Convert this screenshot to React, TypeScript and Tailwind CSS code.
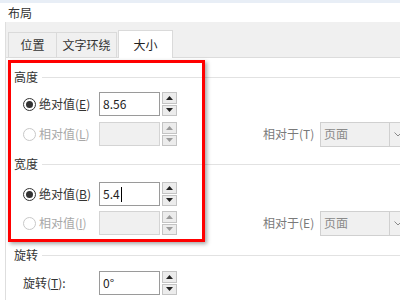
import React from "react";

const font = { fontFamily: '"Noto Sans CJK SC", "Noto Sans", sans-serif' };

function Radio({ checked, disabled }: { checked?: boolean; disabled?: boolean }) {
  return (
    <span
      className={
        "flex h-[13px] w-[13px] shrink-0 items-center justify-center rounded-full border bg-white " +
        (disabled ? "border-[#c8c8c8]" : "border-[#333]")
      }
    >
      {checked && <span className="h-[7px] w-[7px] rounded-full bg-[#333]" />}
    </span>
  );
}

function Spinner({ disabled }: { disabled?: boolean }) {
  const tri = disabled ? "#9a9a9a" : "#222";
  return (
    <div className="ml-[2px] flex h-[24px] w-[15px] shrink-0 flex-col gap-[1px]">
      {[0, 1].map((i) => (
        <div
          key={i}
          className="flex flex-1 items-center justify-center border border-[#c4c4c4] bg-[#ececec]"
        >
          <svg width="7" height="4" viewBox="0 0 7 4">
            {i === 0 ? (
              <path d="M0 4 L3.5 0 L7 4 Z" fill={tri} />
            ) : (
              <path d="M0 0 L3.5 4 L7 0 Z" fill={tri} />
            )}
          </svg>
        </div>
      ))}
    </div>
  );
}

function Input({ value, disabled, cursor }: { value?: string; disabled?: boolean; cursor?: boolean }) {
  return (
    <div
      className={
        "flex h-[24px] w-[61px] shrink-0 items-center px-[3px] text-[12px] " +
        (disabled ? "border border-[#d4d4d4] bg-[#f0f0f0]" : "border border-[#9a9a9a] bg-white text-[#222]")
      }
    >
      {value}
      {cursor && <span className="ml-[1px] h-[15px] w-px bg-black" />}
    </div>
  );
}

function Dropdown() {
  return (
    <div className="flex h-[25px] shrink-0 items-center">
      <div className="flex h-full w-[70px] items-center border border-[#d0d0d0] bg-[#f0f0f0] pl-[3px] text-[12px] text-[#8a8a8a]">
        页面
      </div>
      <div className="flex h-full w-[16px] items-center justify-center border-y border-l-0 border-[#d0d0d0] bg-[#f0f0f0]">
        <svg width="8" height="5" viewBox="0 0 8 5">
          <path d="M0.5 0.5 L4 4 L7.5 0.5" stroke="#8a8a8a" fill="none" strokeWidth="1" />
        </svg>
      </div>
    </div>
  );
}

function SectionLabel({ text, className }: { text: string; className?: string }) {
  return (
    <div className={"flex h-[20px] items-center gap-[4px] pl-[8px] text-[12px] text-[#333] " + (className ?? "")}>
      <span>{text}</span>
      <span className="h-px flex-1 bg-[#e2e2e2]" />
    </div>
  );
}

function Row({
  checked,
  disabled,
  label,
  u,
  value,
  cursor,
  relative,
  className,
}: {
  checked?: boolean;
  disabled?: boolean;
  label: string;
  u: string;
  value?: string;
  cursor?: boolean;
  relative?: string;
  className?: string;
}) {
  return (
    <div className={"flex h-[24px] items-center pl-[17px] " + (className ?? "")}>
      <Radio checked={checked} disabled={disabled} />
      <span
        className={
          "ml-[3px] w-[60px] shrink-0 whitespace-nowrap text-[12px] " +
          (disabled ? "text-[#a8a8a8]" : "text-[#333]")
        }
      >
        {label}(<span className="underline">{u}</span>)
      </span>
      <Input value={value} disabled={disabled} cursor={cursor} />
      <Spinner disabled={disabled} />
      {relative && (
        <>
          <span className="ml-[86px] w-[57px] shrink-0 whitespace-nowrap text-[12px] text-[#7a7a7a]">
            相对于({relative})
          </span>
          <Dropdown />
        </>
      )}
    </div>
  );
}

export default function App() {
  return (
    <div className="relative flex h-[300px] w-[400px] flex-col overflow-hidden bg-white" style={font}>
      <div className="h-[3px] bg-[#e8eef6]" />
      <div className="flex h-[19px] items-center pl-[8px] text-[12px] text-[#333]">布局</div>
      <div className="ml-[5px] flex flex-1 flex-col border-l border-[#dedede]">
        <div className="flex h-[36px] items-end border-b border-[#dcdcdc] bg-[#f0f0f0] pl-[2px]">
          <div className="flex h-[25px] w-[49px] items-center justify-center border border-b-0 border-[#dadada] text-[12px] text-[#333]">
            位置
          </div>
          <div className="flex h-[25px] w-[60px] items-center justify-center border border-b-0 border-l-0 border-[#dadada] text-[12px] text-[#333]">
            文字环绕
          </div>
          <div className="-mb-px ml-[1px] flex h-[28px] w-[55px] items-center justify-center border border-b-0 border-[#dadada] bg-white text-[12px] text-[#222]">
            大小
          </div>
        </div>

        <SectionLabel text="高度" className="mt-[9px]" />
        <Row className="mt-[5px]" checked label="绝对值" u="E" value="8.56" />
        <Row className="mt-[6px]" disabled label="相对值" u="L" relative="T" />

        <SectionLabel text="宽度" className="mt-[8px]" />
        <Row className="mt-[8px]" checked label="绝对值" u="B" value="5.4" cursor />
        <Row className="mt-[5px]" disabled label="相对值" u="I" relative="E" />

        <SectionLabel text="旋转" className="mt-[10px]" />
        <div className="mt-[6px] flex h-[24px] items-center pl-[17px]">
          <span className="w-[76px] shrink-0 whitespace-nowrap text-[12px] text-[#333]">
            旋转(<span className="underline">T</span>):
          </span>
          <Input value="0°" />
          <Spinner />
        </div>
      </div>

      <div className="absolute left-[8px] top-[60px] h-[182px] w-[197px] border-[3px] border-[#ff0000] shadow-[2px_2px_4px_rgba(0,0,0,0.35)]" />
    </div>
  );
}
